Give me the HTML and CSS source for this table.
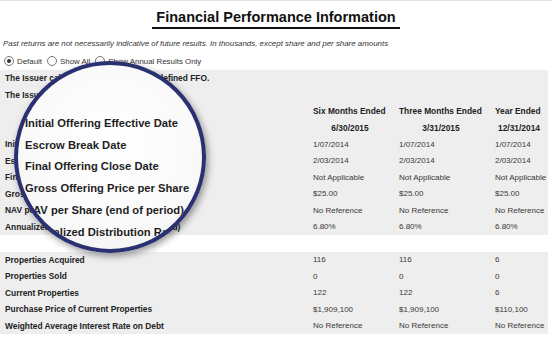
FILE: index.html
```html
<!DOCTYPE html>
<html>
<head>
<meta charset="utf-8">
<link rel="stylesheet" href="styles.css">
</head>
<body>
<div class="page">
  <div class="title-wrap"><h1 class="title">Financial Performance Information</h1></div>
  <p class="note">Past returns are not necessarily indicative of future results. In thousands, except share and per share amounts</p>
  <div class="radios">
    <span class="radio checked"></span><span class="rlabel">Default</span>
    <span class="radio"></span><span class="rlabel">Show All</span>
    <span class="radio"></span><span class="rlabel">Show Annual Results Only</span>
  </div>

  <div class="panel grid">
    <div class="lbl span">The Issuer calculates MFFO using IPA defined FFO.</div>
    <div class="lbl span">The Issuer reports MFFO per NAREIT FFO.</div>
    <div class="lbl"></div><div class="hd">Six Months Ended</div><div class="hd">Three Months Ended</div><div class="hd">Year Ended</div>
    <div class="lbl"></div><div class="hd date">6/30/2015</div><div class="hd date">3/31/2015</div><div class="hd date">12/31/2014</div>
    <div class="lbl">Initial Offering Effective Date</div><div class="val">1/07/2014</div><div class="val">1/07/2014</div><div class="val">1/07/2014</div>
    <div class="lbl">Escrow Break Date</div><div class="val">2/03/2014</div><div class="val">2/03/2014</div><div class="val">2/03/2014</div>
    <div class="lbl">Final Offering Close Date</div><div class="val">Not Applicable</div><div class="val">Not Applicable</div><div class="val">Not Applicable</div>
    <div class="lbl">Gross Offering Price per Share</div><div class="val">$25.00</div><div class="val">$25.00</div><div class="val">$25.00</div>
    <div class="lbl">NAV per Share (end of period)</div><div class="val">No Reference</div><div class="val">No Reference</div><div class="val">No Reference</div>
    <div class="lbl">Annualized Distribution Rate (end of period)</div><div class="val">6.80%</div><div class="val">6.80%</div><div class="val">6.80%</div>
  </div>
  <div class="spacer"></div>
  <div class="panel grid">
    <div class="lbl">Properties Acquired</div><div class="val">116</div><div class="val">116</div><div class="val">6</div>
    <div class="lbl">Properties Sold</div><div class="val">0</div><div class="val">0</div><div class="val">0</div>
    <div class="lbl">Current Properties</div><div class="val">122</div><div class="val">122</div><div class="val">6</div>
    <div class="lbl">Purchase Price of Current Properties</div><div class="val">$1,909,100</div><div class="val">$1,909,100</div><div class="val">$110,100</div>
    <div class="lbl">Weighted Average Interest Rate on Debt</div><div class="val">No Reference</div><div class="val">No Reference</div><div class="val">No Reference</div>
  </div>

  <div class="lens">
    <div class="lens-line">Initial Offering Effective Date</div>
    <div class="lens-line">Escrow Break Date</div>
    <div class="lens-line">Final Offering Close Date</div>
    <div class="lens-line">Gross Offering Price per Share</div>
    <div class="lens-line">NAV per Share (end of period)</div>
    <div class="lens-line">Annualized Distribution Rate (end of period)</div>
  </div>
</div>
</body>
</html>
```

FILE: styles.css
```css
html, body {
  margin: 0;
  padding: 0;
  background: #fff;
}
body {
  width: 552px;
  height: 345px;
  overflow: hidden;
  font-family: "Liberation Sans", Arial, sans-serif;
  color: #222;
}
.page {
  position: relative;
  height: 344px;
  border-top: 1px solid #e2e2e2;
}
.title-wrap {
  text-align: center;
  padding-top: 7px;
  height: 22px;
}
.title {
  display: inline-block;
  margin: 0;
  padding: 0 4px 1px;
  font-size: 14.5px;
  line-height: 17px;
  font-weight: bold;
  color: #111;
  border-bottom: 2px solid #111;
}
.note {
  margin: 9px 0 0 3px;
  font-size: 7.9px;
  line-height: 10px;
  font-style: italic;
  color: #333;
}
.radios {
  display: flex;
  align-items: center;
  height: 12px;
  margin: 6px 0 0 4px;
  font-size: 7.9px;
  color: #333;
}
.radio {
  width: 8px;
  height: 8px;
  border: 1px solid #777;
  border-radius: 50%;
  background: #fff;
  margin-right: 3px;
  position: relative;
}
.radio.checked::after {
  content: "";
  position: absolute;
  left: 2px;
  top: 2px;
  width: 4px;
  height: 4px;
  border-radius: 50%;
  background: #333;
}
.rlabel {
  margin-right: 5px;
}
.panel {
  width: 548px;
  background: #eeeeee;
  margin-top: 3px;
}
.grid {
  display: grid;
  grid-template-columns: 301px 74px 84px 48px;
  column-gap: 12px;
  grid-auto-rows: 16.5px;
  align-items: center;
  font-size: 8.4px;
}
.lbl {
  padding-left: 5px;
  font-weight: bold;
  color: #222;
  white-space: nowrap;
}
.span {
  grid-column: 1 / -1;
}
.hd {
  font-weight: bold;
  color: #222;
  white-space: nowrap;
}
.date {
  text-align: center;
}
.val {
  font-size: 8px;
  color: #383838;
  white-space: nowrap;
}
.spacer {
  height: 16.5px;
}
.spacer + .panel {
  margin-top: 0;
}
.lens {
  position: absolute;
  left: 14px;
  top: 60px;
  width: 192px;
  height: 192px;
  box-sizing: border-box;
  border: 4px solid #2a3172;
  border-radius: 50%;
  overflow: hidden;
  background: radial-gradient(circle at 50% 45%, #ffffff 0%, #fafafa 60%, #ececec 100%);
  box-shadow: 2px 3px 7px rgba(0, 0, 0, 0.4);
  padding: 48px 0 0 7px;
}
.lens-line {
  font-size: 11.2px;
  line-height: 21.7px;
  font-weight: bold;
  color: #1e1e1e;
  white-space: nowrap;
}
```
